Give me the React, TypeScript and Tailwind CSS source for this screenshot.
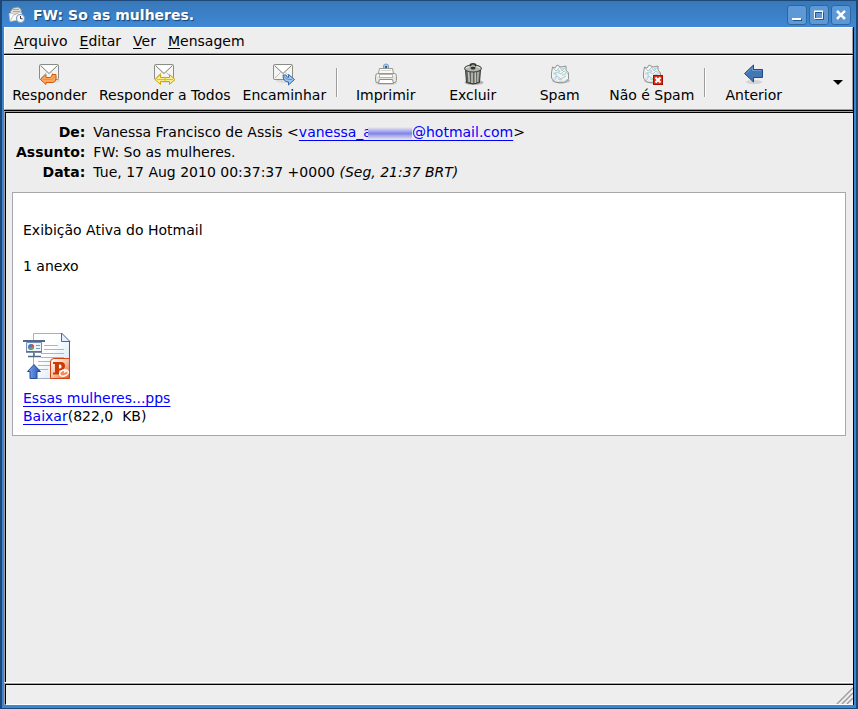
import React from "react";

function MailAppIcon() {
  return (
    <svg width="18" height="18" viewBox="0 0 18 18" aria-hidden="true">
      <path d="M2.5 5.500 5 2l5-1 3 2 1 6-11 2z" fill="#deddd7" stroke="#8b8880" strokeWidth=".8" />
      <path d="M5 3.500h6M5 5.500h7" stroke="#a7a59e" />
      <path d="M1 7.500 3 7l4 1.500L12 6l2 1.500v6L2 15.500z" fill="#fafaf7" stroke="#b5b3ac" strokeWidth=".7" />
      <path d="m2.500 14.500 3-5.500 5-2" stroke="#aaa" fill="none" strokeWidth=".7" />
      <circle cx="12.5" cy="12.5" r="4" fill="#f5f8fc" stroke="#7f9cc4" strokeWidth="1.2" />
      <path d="M12.5 10v2.700h2" fill="none" stroke="#333" />
    </svg>
  );
}

function Letter() {
  return (
    <>
      <ellipse cx="13" cy="18.5" rx="9" ry="2.4" fill="#000" opacity=".08" />
      <rect x="1.5" y="2.5" width="19" height="15" rx="1" fill="#f4f4f2" stroke="#8a8c87" />
      <path d="m2.5 16.5 6-6m11 6-6-6" stroke="#bcbdb9" fill="none" />
      <path d="m2.5 3.5 8.5 8 8.5-8" stroke="#777a75" fill="#fff" />
    </>
  );
}

function ReplyIcon() {
  return (
    <svg width="24" height="24" viewBox="0 0 24 24" aria-hidden="true">
      <Letter />
      <path d="M2.5 17.5 8 12.5v3h4q2 0 2-3h4v3.5q0 4.500-4 4.500H8v2z" fill="#fca95b" stroke="#d05a08" strokeLinejoin="round" />
      <path d="M5 17.500h8.500q2.500 0 3-4" fill="none" stroke="#f68a38" />
    </svg>
  );
}

function ReplyAllIcon() {
  return (
    <svg width="24" height="24" viewBox="0 0 24 24" aria-hidden="true">
      <Letter />
      <path d="m2 17.5 5.5-5v3h9v-3l5.5 5-5.5 5v-3h-9v3z" fill="#fcef8b" stroke="#c9a800" strokeLinejoin="round" />
      <path d="M4 17.5h16M12 15.5v4" stroke="#dcc021" />
    </svg>
  );
}

function ForwardIcon() {
  return (
    <svg width="24" height="24" viewBox="0 0 24 24" aria-hidden="true">
      <Letter />
      <path d="m22.5 17.5-6-5v3q-2 0-2.5-2.500h-3q0 7 5.500 7v3z" fill="#a2c5ee" stroke="#3465a4" strokeLinejoin="round" />
      <path d="M12.5 14.5q1 3.500 7.500 3" stroke="#5c91cf" fill="none" />
    </svg>
  );
}

function PrintIcon() {
  return (
    <svg width="24" height="24" viewBox="0 0 24 24" aria-hidden="true">
      <ellipse cx="12" cy="21" rx="11" ry="2" fill="#000" opacity=".12" />
      <path d="M9.500 8V4q0-2 2.500-2t2.500 2v4" fill="#a9c8ed" stroke="#7c9fce" />
      <path d="M12 4v3" stroke="#315d96" strokeWidth="2" />
      <path d="M4.500 11.500 5.500 6.500h13l1 5z" fill="#fafaf8" stroke="#9a9b93" />
      <path d="M7 8.500h10" stroke="#d4d4cf" />
      <path d="M3.500 11.500h17q2 0 2 3v4q0 2-2 2h-17q-2 0-2-2v-4q0-3 2-3z" fill="#e5e5df" stroke="#96978f" />
      <path d="M3 13.500h3M18 13.500h3" stroke="#fff" />
      <rect x="5.500" y="12.500" width="13" height="3" fill="#fff" stroke="#b5b6ae" />
      <path d="M5.500 17.500h13l1 4h-15z" fill="#fff" stroke="#8e8f88" />
    </svg>
  );
}

function TrashIcon() {
  return (
    <svg width="24" height="24" viewBox="0 0 24 24" aria-hidden="true">
      <ellipse cx="13" cy="20.5" rx="9.500" ry="2.500" fill="#777" opacity=".5" />
      <path d="M4.500 7.500h15l-1 13q-6.500 3-13 0z" fill="#777973" stroke="#343632" />
      <path d="m7.500 10 .7 10M11 10v11M14.300 10v11M17 10l-.6 10" stroke="#c0c2bc" strokeWidth="1.500" />
      <path d="m6 10 .7 10M9.500 10v11M12.700 10v11M15.800 10v11" stroke="#555752" strokeWidth=".7" />
      <ellipse cx="12" cy="6.500" rx="8.500" ry="3.500" fill="#b5b6b0" stroke="#3c3e3a" />
      <path d="M5 6q7-4 14 0" stroke="#f0f0ed" fill="none" />
      <path d="M9.500 4.500v-2q2.500-1.500 5 0v2" fill="none" stroke="#30322f" strokeWidth="1.500" />
      <ellipse cx="12" cy="6" rx="2.500" ry="1.500" fill="#333" />
    </svg>
  );
}

function PaperBall() {
  return (
    <>
      <ellipse cx="13" cy="18.500" rx="9" ry="3" fill="#555" opacity=".35" />
      <path d="m3.500 11 1-6 2.500 1 2-3 4 2 5-1v4l2.500 3v6l-3.500 3-5 .8-5-.8-3.500-4z" fill="#f1f5f5" stroke="#8f9492" strokeLinejoin="round" />
      <path d="m5 6 3 3 4-4 2 4 4-4M5 12l4-2 4 2 3-3 4 3M7 18l2-4 4 3 5-3" stroke="#a9b8ba" fill="none" strokeWidth=".8" />
      <path d="m6 11 3 2M14 7l3-1M14 13l4-1M10 17l4 1M7 15l2-1M10 8l2 2" stroke="#b2dae2" strokeWidth="1.800" />
      <path d="m5 15 4 4.500h6l4-2" stroke="#d5dcdb" fill="none" />
    </>
  );
}

function SpamIcon() {
  return (
    <svg width="24" height="24" viewBox="0 0 24 24" aria-hidden="true">
      <PaperBall />
    </svg>
  );
}

function NotSpamIcon() {
  return (
    <svg width="24" height="24" viewBox="0 0 24 24" aria-hidden="true">
      <PaperBall />
      <rect x="13.500" y="13.500" width="9" height="9" fill="#db2d11" stroke="#a60c00" />
      <path d="m15.500 15.500 5 5m0-5-5 5" stroke="#fff" strokeWidth="2.200" />
    </svg>
  );
}

function BackIcon() {
  return (
    <svg width="24" height="24" viewBox="0 0 24 24" aria-hidden="true">
      <ellipse cx="12" cy="20" rx="8" ry="2" fill="#777" opacity=".22" />
      <path d="m2.500 11.500 9-8.500v4.500h9v8h-9V20z" fill="#4377b4" stroke="#204a87" />
      <path d="m4 11.500 6.500-6v3h9" stroke="#6a97ca" fill="none" />
    </svg>
  );
}

function PresentationIcon() {
  return (
    <svg width="49" height="49" viewBox="0 0 49 49" aria-hidden="true">
      <defs>
        <linearGradient id="sheet" x2="1" y2="1">
          <stop offset=".4" stopColor="#fff" />
          <stop offset="1" stopColor="#c9def5" />
        </linearGradient>
        <linearGradient id="arrow" x2="1">
          <stop stopColor="#7ea9ee" />
          <stop offset="1" stopColor="#2455b9" />
        </linearGradient>
        <linearGradient id="badge" x2="1" y2="1">
          <stop stopColor="#fff" />
          <stop offset=".5" stopColor="#f9c3a5" />
          <stop offset="1" stopColor="#e4571c" />
        </linearGradient>
      </defs>
      <path d="M10.500 1.500h28l8 8v37h-36z" fill="url(#sheet)" stroke="#a3b1c6" />
      <path d="M46.500 9v37" stroke="#3b5f9c" />
      <path d="M38.500 1v8.500H47z" fill="#e6f1ff" stroke="#4a6798" />
      <path d="M21 13.500h14M21 17.500h20M18 21.500h23M18 25.500h23M15 29.500h20M15 33.500h12M15 37.500h10" stroke="#9ab9df" />
      <path d="M0 9h22" stroke="#4f688d" strokeWidth="2" />
      <path d="M3.500 10.500h15v9h-15z" fill="#edf3fa" stroke="#778ead" />
      <circle cx="8" cy="15" r="3" fill="#4878c6" />
      <path d="M8 15v-3a3 3 0 0 1 3 3z" fill="#dd4a45" />
      <path d="M8 15h3a3 3 0 0 1-5 2z" fill="#62ac56" />
      <path d="M13 13.500h4M13 16.500h4" stroke="#8297b5" />
      <path d="M3 20h16M11 21v4M5 24.500h13" stroke="#506989" strokeWidth="1.500" />
      <path d="m11 32.500 6.500 7H14v7H7v-7H4.500z" fill="url(#arrow)" stroke="#254f9c" />
      <path d="M27.500 30q0-3.500 3.500-3.500h15.500v20h-19z" fill="url(#badge)" stroke="#ce4311" />
      <path d="M30 30h8q4 0 4 4t-5 4.500h-1v2h1.500v2H30v-2h2V32h-2z" fill="#c83c08" />
      <path d="M36 32.500h1q1.500 0 1.500 2t-1.500 2h-1z" fill="#fff" />
      <ellipse cx="41" cy="41" rx="4.500" ry="3" fill="#f48b59" stroke="#fff" strokeWidth="1.500" transform="rotate(-20 41 41)" />
      <path d="M41 41v-3l4 1z" fill="#fff" />
    </svg>
  );
}

function Menu({ label }: { label: string }) {
  return (
    <button type="button" className="whitespace-nowrap">
      <span className="underline underline-offset-2">{label[0]}</span>
      {label.slice(1)}
    </button>
  );
}

function Tool({ label, icon }: { label: string; icon: React.ReactNode }) {
  return (
    <button type="button" className="flex min-w-[87px] shrink-0 flex-col items-center px-1.5 pt-1.5 leading-[18px] whitespace-nowrap">
      {icon}
      <span>{label}</span>
    </button>
  );
}

function Separator() {
  return (
    <div className="flex w-2.5 shrink-0 justify-center py-3">
      <div className="w-0.5 border-r border-l border-r-white border-l-[#9d9d9d]" />
    </div>
  );
}

function WindowButton({ label, children }: { label: string; children: React.ReactNode }) {
  return (
    <button
      type="button"
      aria-label={label}
      className="flex size-5 items-center justify-center rounded-[3px] border border-[#2d679f] bg-[#5d98d7]"
    >
      <svg width="14" height="14" viewBox="0 0 14 14" fill="none" aria-hidden="true">
        {children}
      </svg>
    </button>
  );
}

function Link({ href, children }: { href: string; children: React.ReactNode }) {
  return (
    <a href={href} className="text-[#0000ff] underline decoration-1 underline-offset-3 [text-decoration-skip-ink:none]">
      {children}
    </a>
  );
}

function Field({ label, children }: { label: string; children: React.ReactNode }) {
  return (
    <>
      <dt className="text-right font-bold">{label}</dt>
      <dd className="whitespace-nowrap">{children}</dd>
    </>
  );
}

export default function App() {
  return (
    <div className="flex min-h-screen flex-col border-r-2 border-b border-l-2 border-[#1c4878] bg-[#3d86d2] pr-0.5 pb-[3px] pl-0.5 font-['DejaVu_Sans',sans-serif] text-[14px] leading-5 text-black">
      <header className="-mx-0.5 flex h-[27px] shrink-0 items-center gap-[7px] border-t border-[#1c4878] bg-linear-to-b from-[#3778b9] to-[#3f88d5] pt-px pr-[5px] pl-1.5 text-white">
        <MailAppIcon />
        <h1 className="flex-1 font-bold [text-shadow:1px_1px_1px_#173f6c]">FW: So as mulheres.</h1>
        <div className="flex gap-0.5">
          <WindowButton label="Minimizar">
            <path d="M3 12h9" stroke="#285785" strokeWidth="2" />
            <path d="M2 11h9" stroke="#fff" strokeWidth="2" />
          </WindowButton>
          <WindowButton label="Maximizar">
            <path d="M3.500 4.500h8v7h-8z" stroke="#285785" />
            <path d="M2.500 3.500h8v7h-8zM2 3h9" stroke="#fff" />
          </WindowButton>
          <WindowButton label="Fechar">
            <path d="m4 4 7 7m0-7-7 7" stroke="#285785" strokeWidth="2" />
            <path d="m3 3 8 8m0-8-8 8" stroke="#fff" strokeWidth="2.500" />
          </WindowButton>
        </div>
      </header>

      <div className="flex flex-1 flex-col border-r border-black bg-[#ededed]">
        <nav className="border-b border-black">
          <div className="flex h-[27px] items-center gap-3 border border-t-white border-r-[#a0a0a0] border-b-[#a0a0a0] border-l-white bg-[#eeeeee] px-[9px]">
            <Menu label="Arquivo" />
            <Menu label="Editar" />
            <Menu label="Ver" />
            <Menu label="Mensagem" />
          </div>
        </nav>

        <div className="border-b border-black">
          <div className="flex h-[55px] border border-t-white border-r-[#a0a0a0] border-b-[#a0a0a0] border-l-white bg-[#eeeeee] pr-[7px] pl-px">
            <Tool label="Responder" icon={<ReplyIcon />} />
            <Tool label="Responder a Todos" icon={<ReplyAllIcon />} />
            <Tool label="Encaminhar" icon={<ForwardIcon />} />
            <Separator />
            <Tool label="Imprimir" icon={<PrintIcon />} />
            <Tool label="Excluir" icon={<TrashIcon />} />
            <Tool label="Spam" icon={<SpamIcon />} />
            <Tool label="Não é Spam" icon={<NotSpamIcon />} />
            <Separator />
            <Tool label="Anterior" icon={<BackIcon />} />
            <button type="button" aria-label="Mais ações" className="ml-auto flex w-3.5 items-center justify-center">
              <svg width="10" height="5" viewBox="0 0 10 5" aria-hidden="true">
                <path d="M0 0h10L5 5z" />
              </svg>
            </button>
          </div>
        </div>

        <main className="flex flex-1 flex-col border-t border-b border-l border-t-[#a0a0a0] border-b-white border-l-[#a0a0a0]">
          <div className="flex-1 border-t border-l border-black px-1.5 pt-[9px] pr-[7px]">
            <dl className="grid grid-cols-[auto_1fr] gap-x-2 pl-1">
              <Field label="De:">
                Vanessa Francisco de Assis &lt;
                <Link href="#remetente">
                  vanessa_a
                  <span className="-ml-1 inline-block h-3.5 w-11 border-b border-[#0000ff] bg-linear-to-b from-[#ededed] via-[#8585e9] to-[#ededed] align-[-4px]" />
                  @hotmail.com
                </Link>
                &gt;
              </Field>
              <Field label="Assunto:">FW: So as mulheres.</Field>
              <Field label="Data:">
                Tue, 17 Aug 2010 00:37:37 +0000 <em>(Seg, 21:37 BRT)</em>
              </Field>
            </dl>

            <article className="mt-2.5 border border-[#a8a8a8] bg-white px-2.5 pt-7 pb-2.5 leading-[18px]">
              <p>Exibição Ativa do Hotmail</p>
              <p className="mt-[18px]">1 anexo</p>
              <div className="mt-[57px]">
                <PresentationIcon />
              </div>
              <p className="mt-2">
                <Link href="#arquivo">Essas mulheres...pps</Link>
              </p>
              <p>
                <Link href="#baixar">Baixar</Link>
                (822,0&nbsp; KB)
              </p>
            </article>
          </div>
        </main>

        <footer className="border-t border-l border-[#a0a0a0]">
          <div className="flex h-[21px] items-end justify-end border-t border-b border-l border-t-black border-b-white border-l-black bg-[#eeeeee]">
            <svg width="18" height="17" viewBox="0 0 18 17" fill="none" aria-hidden="true">
              <path d="M3 17 18 2M8 17 18 7M13 17l5-5" stroke="#fff" />
              <path d="M2 17 18 1M7 17 18 6M12 17l6-6" stroke="#9c9c9c" strokeWidth="1.500" />
            </svg>
          </div>
        </footer>
      </div>
    </div>
  );
}
